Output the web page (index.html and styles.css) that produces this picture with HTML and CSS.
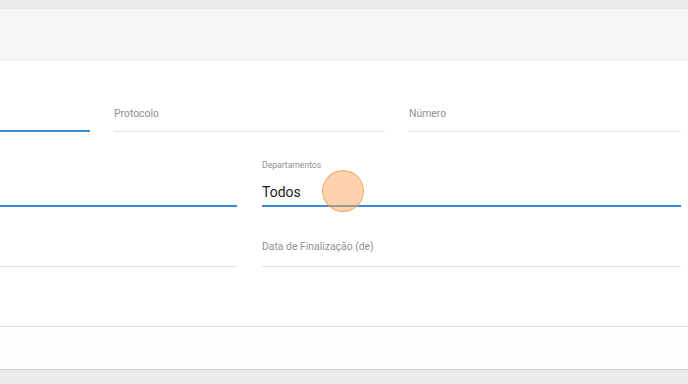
FILE: index.html
```html
<!DOCTYPE html>
<html lang="pt">
<head>
<meta charset="utf-8">
<link rel="stylesheet" href="styles.css">
</head>
<body>
<div class="topbar"></div>
<div class="header"></div>
<main class="form">
  <div class="row row1">
    <div class="field w90 active"></div>
    <div class="field w271"><span class="label">Protocolo</span></div>
    <div class="field w272"><span class="label">Número</span></div>
  </div>
  <div class="row row2">
    <div class="field w237 active"></div>
    <div class="field w419 active">
      <span class="float-label">Departamentos</span>
      <span class="value">Todos</span>
      <span class="touch"></span>
    </div>
  </div>
  <div class="row row3">
    <div class="field w237"></div>
    <div class="field w419"><span class="label">Data de Finalização (de)</span></div>
  </div>
</main>
<div class="footer"></div>
<div class="bottombar"></div>
</body>
</html>
```
FILE: styles.css
```css
* { box-sizing: border-box; }
html, body { margin: 0; padding: 0; }
body {
  width: 688px;
  height: 384px;
  overflow: hidden;
  background: #fff;
  font-family: Roboto, "Liberation Sans", sans-serif;
}
.topbar { height: 9px; background: #ebebeb; }
.header { height: 52px; background: #f6f6f6; border-bottom: 3px solid #f3f3f3; }
.form { padding: 31px 7px 0 0; height: 266px; border-bottom: 1px solid #dddddd; }
.row { display: flex; }
.row1 { gap: 24px; }
.row1 .field { height: 40px; }
.row2 { gap: 25px; }
.row2 .field { height: 75px; }
.row3 { gap: 25px; }
.row3 .field { height: 60px; }
.field {
  position: relative;
  border-bottom: 1px solid #e2e2e2;
  display: flex;
  flex-direction: column;
}
.field.active { border-bottom: 2px solid #3d8ad4; }
.w90 { width: 90px; }
.w271 { width: 271px; }
.w272 { width: 272px; }
.w237 { width: 237px; }
.w419 { width: 419px; }
.label {
  font-size: 10.4px;
  line-height: 14px;
  color: #909090;
}
.row1 .label { padding-top: 15px; }
.row3 .label { padding-top: 33px; }
.float-label {
  margin-top: 28px;
  font-size: 8.6px;
  line-height: 10px;
  color: #909090;
}
.value {
  margin-top: 13px;
  font-size: 14px;
  line-height: 18px;
  color: #222;
}
.touch {
  position: absolute;
  left: 60px;
  top: 38px;
  width: 42px;
  height: 42px;
  border-radius: 50%;
  background: rgba(252, 165, 95, 0.5);
  border: 1.5px solid rgba(245, 150, 70, 0.75);
}
.footer { height: 43px; border-bottom: 1px solid #cccccc; background: #fefefe; }
.bottombar { height: 15px; background: #ebebeb; }
```
